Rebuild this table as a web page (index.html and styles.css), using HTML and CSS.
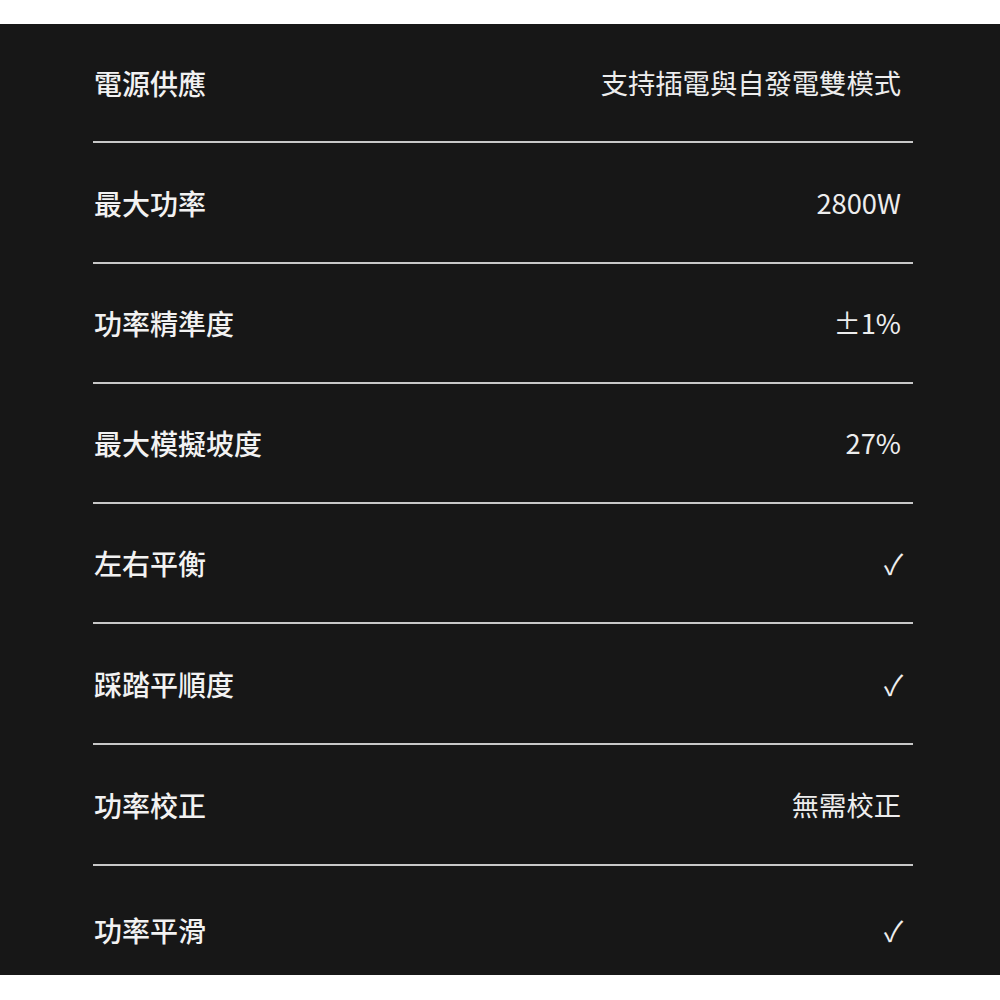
FILE: index.html
```html
<!DOCTYPE html>
<html lang="zh-Hant">
<head>
<meta charset="utf-8">
<link rel="stylesheet" href="styles.css">
</head>
<body>
<div class="panel">
  <div class="spec">
    <div class="row"><span class="label">電源供應</span><span class="value">支持插電與自發電雙模式</span></div>
    <div class="row tall"><span class="label">最大功率</span><span class="value">2800W</span></div>
    <div class="row"><span class="label">功率精準度</span><span class="value">±1%</span></div>
    <div class="row"><span class="label">最大模擬坡度</span><span class="value">27%</span></div>
    <div class="row"><span class="label">左右平衡</span><span class="value check">✓</span></div>
    <div class="row tall"><span class="label">踩踏平順度</span><span class="value check">✓</span></div>
    <div class="row tall"><span class="label">功率校正</span><span class="value">無需校正</span></div>
    <div class="row last"><span class="label">功率平滑</span><span class="value check">✓</span></div>
  </div>
</div>
</body>
</html>
```

FILE: styles.css
```css
html, body {
  margin: 0;
  padding: 0;
  background: #ffffff;
}

body {
  padding-top: 24px;
  font-family: "Noto Sans CJK TC", "Noto Sans CJK SC", "Noto Sans", sans-serif;
}

.panel {
  background: #171717;
  height: 951px;
  box-sizing: border-box;
  padding: 0 87px 0 93px;
}

.spec {
  display: flex;
  flex-direction: column;
}

.row {
  display: flex;
  align-items: center;
  justify-content: space-between;
  height: 120px;
  box-sizing: border-box;
  border-bottom: 2px solid #c8c8c8;
}

.row:first-child {
  height: 119px;
}

.row.tall {
  height: 121px;
}

.row.last {
  border-bottom: none;
  height: 109px;
  padding-top: 18px;
}

.label {
  font-size: 28px;
  font-weight: 500;
  color: #f2f2f2;
  line-height: 1;
  padding-left: 1px;
}

.value {
  font-size: 27.3px;
  font-weight: 400;
  color: #ededed;
  line-height: 1;
  padding-right: 12px;
}

.check {
  font-size: 28px;
  padding-right: 10px;
}
```
